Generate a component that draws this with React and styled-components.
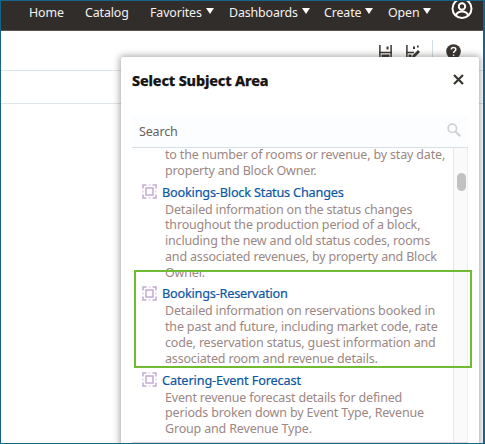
import React from "react";
import styled, { createGlobalStyle } from "styled-components";

const GlobalStyle = createGlobalStyle`
  *, *::before, *::after { box-sizing: border-box; }
  html, body { margin: 0; background: #fff; }
  body { font-family: "Noto Sans", "Open Sans", sans-serif; overflow: hidden; }
`;

const Window = styled.div`
  position: relative;
  display: flex;
  flex-direction: column;
  width: 485px;
  height: 444px;
  overflow: hidden;
  background: #fff;
  border: 1px solid #17648a;
  border-right-width: 2px;
`;

const NavBar = styled.nav`
  flex: none;
  display: flex;
  height: 30px;
  background: #312d2a;
  border-bottom: 1px solid #595653;
  padding-left: 28px;
`;

const NavItem = styled.div`
  flex: none;
  display: flex;
  width: ${(p) => p.$width}px;
  height: 24px;
  align-items: center;
  font-size: 12.4px;
  line-height: 24px;
  letter-spacing: -0.12px;
  color: #f4f2f0;
  white-space: nowrap;
`;

const Caret = styled.svg`
  flex: none;
  width: 8px;
  height: 6px;
  margin: 0 0 4px 4px;
  fill: #fff;
`;

const Avatar = styled.svg`
  flex: none;
  width: 22px;
  height: 22px;
  margin: -4px 0 0 -1px;
`;

const ToolStrip = styled.div`
  flex: none;
  display: flex;
  justify-content: flex-end;
  height: 40px;
  padding: 9px 22px 0 0;
  border-bottom: 1px solid #dde5ea;
`;

const ToolIcon = styled.svg`
  flex: none;
  width: 15px;
  height: 15px;
  margin: 4px ${(p) => p.$gap}px 0 0;
`;

const Divider = styled.div`
  width: 1px;
  height: 24px;
  margin-right: 13px;
  background: #d3dde4;
`;

const FormRow = styled.div`
  flex: none;
  height: 33px;
  border-bottom: 1px solid #dde5ea;
`;

const Dialog = styled.section`
  position: absolute;
  left: 120px;
  top: 56px;
  width: 358px;
  height: 400px;
  padding: 0 11px;
  background: #fff;
  border-radius: 2px 2px 0 0;
  box-shadow: 0 0 7px 1px rgba(40, 36, 30, 0.42);
`;

const DialogHeader = styled.header`
  display: flex;
  height: 58px;
  justify-content: space-between;
  align-items: flex-start;
  padding: 13px 4px 0 0;
`;

const DialogTitle = styled.h1`
  margin: 0;
  font-size: 14.4px;
  line-height: 22px;
  font-weight: 800;
  letter-spacing: -0.16px;
  color: #161513;
  -webkit-text-stroke: 0.25px #161513;
  white-space: nowrap;
`;

const CloseIcon = styled.svg`
  width: 11px;
  height: 11px;
  margin-top: 4px;
`;

const SearchField = styled.div`
  display: flex;
  align-items: center;
  justify-content: space-between;
  height: 33px;
  padding: 0 7px;
  background: #fbfdfe;
  border-bottom: 1px solid #d5dfe5;
  font-size: 12.5px;
  letter-spacing: -0.15px;
  color: #66615e;
`;

const SearchIcon = styled.svg`
  width: 14px;
  height: 14px;
  margin-top: -3px;
`;

const ListFrame = styled.div`
  display: flex;
  height: 295px;
  overflow: hidden;
  border-bottom: 1px solid #d8d8d8;
`;

const List = styled.div`
  flex: 1;
  min-width: 0;
  margin-top: -1.1px;
`;

const Track = styled.div`
  flex: none;
  width: 15px;
  padding: 25px 0 0 3px;
  background: #fafafa;
  border-left: 1px solid #e8e8e8;
  border-right: 1px solid #eeeeee;
`;

const Thumb = styled.div`
  width: 9px;
  height: 18px;
  border-radius: 4.5px;
  background: #c1c1c1;
`;

const Entry = styled.article`
  padding-left: 33px;
`;

const EntryHeading = styled.h2`
  display: flex;
  align-items: center;
  height: 23px;
  margin: 0 0 0 -23.5px;
  padding: 4px 0 1px;
  font-size: 12.7px;
  font-weight: 400;
  line-height: 18px;
  letter-spacing: ${(p) => p.$spacing}px;
  color: #0b57a4;
  -webkit-text-stroke: 0.2px #0b57a4;
  white-space: nowrap;
`;

const AreaIcon = styled.svg`
  flex: none;
  width: 15px;
  height: 15px;
  margin-right: 5.5px;
`;

const Description = styled.p`
  margin: 0;
  font-size: 12.5px;
  line-height: 15.8px;
  letter-spacing: -0.17px;
  color: #9b8784;
  white-space: pre;
`;

const Highlight = styled.div`
  position: absolute;
  left: 133px;
  top: 269px;
  width: 338px;
  height: 98px;
  border: 2px solid #6fbc33;
`;

const NAV = [
  { label: "Home", width: 56 },
  { label: "Catalog", width: 65 },
  { label: "Favorites", width: 79, menu: true },
  { label: "Dashboards", width: 95, menu: true },
  { label: "Create", width: 64, menu: true },
  { label: "Open", width: 64, menu: true },
];

const ENTRIES = [
  {
    lines: [
      "to the number of rooms or revenue, by stay date,",
      "property and Block Owner.",
    ],
  },
  {
    title: "Bookings-Block Status Changes",
    spacing: -0.19,
    lines: [
      "Detailed information on the status changes",
      "throughout the production period of a block,",
      "including the new and old status codes, rooms",
      "and associated revenues, by property and Block",
      "Owner.",
    ],
  },
  {
    title: "Bookings-Reservation",
    spacing: -0.21,
    lines: [
      "Detailed information on reservations booked in",
      "the past and future, including market code, rate",
      "code, reservation status, guest information and",
      "associated room and revenue details.",
    ],
  },
  {
    title: "Catering-Event Forecast",
    spacing: -0.12,
    lines: [
      "Event revenue forecast details for defined",
      "periods broken down by Event Type, Revenue",
      "Group and Revenue Type.",
    ],
  },
];

function SubjectAreaIcon() {
  return (
    <AreaIcon viewBox="0 0 15 15" fill="none" stroke="#c3abd6" strokeWidth="1.5">
      <path d="M1 4.500V1h3.500M10.500 1H14v3.500M14 10.500V14h-3.500M4.500 14H1v-3.500" />
      <rect x="4" y="4" width="7" height="7" />
      <path d="M6.500 1h2M6.500 14h2M1 6.500v2M14 6.500v2" strokeWidth="0.800" />
    </AreaIcon>
  );
}

export default function App() {
  return (
    <>
      <GlobalStyle />
      <Window>
        <NavBar>
          {NAV.map((n) => (
            <NavItem key={n.label} $width={n.width}>
              {n.label}
              {n.menu && (
                <Caret viewBox="0 0 8 6">
                  <path d="M0 0h8L4 6z" />
                </Caret>
              )}
            </NavItem>
          ))}
          <Avatar viewBox="0 0 22 22" fill="none" stroke="#fff" strokeWidth="2">
            <circle cx="11" cy="11.500" r="9.500" />
            <circle cx="11" cy="9.500" r="3.200" />
            <path d="M4.800 18c1.400-2.600 3.500-3.500 6.200-3.500s4.800.900 6.200 3.500" />
          </Avatar>
        </NavBar>
        <ToolStrip>
          <ToolIcon $gap={12} viewBox="0 0 15 15">
            <path d="M1.900 1v12M13.100 1v12M1 8.500h13" fill="none" stroke="#3a3632" strokeWidth="1.500" />
            <path d="M8.500 2.500h2v3h-2zM3.500 10.500h8V15h-8z" fill="#3a3632" />
          </ToolIcon>
          <ToolIcon $gap={12} viewBox="0 0 15 15">
            <path d="M1.900 1v12M1 8.500h8" fill="none" stroke="#3a3632" strokeWidth="1.500" />
            <path d="M8 2.500h2v2.500H8zM12 1.500h1.700v2H12zM3.500 10.500h3V15h-3z" fill="#3a3632" />
            <path d="M6.500 14.500l1-3 5.500-5.500 2 2-5.500 5.500z" fill="#3a3632" />
          </ToolIcon>
          <Divider />
          <ToolIcon $gap={0} viewBox="0 0 15 15">
            <circle cx="7.500" cy="7.500" r="7.300" fill="#3a3632" />
            <path d="M5.300 5.600c0-3 4.500-2.800 4.500-.2 0 1.800-2.200 1.600-2.200 3.600M7.600 10.500v1.500" fill="none" stroke="#fff" strokeWidth="1.500" />
          </ToolIcon>
        </ToolStrip>
        <FormRow />
        <Dialog>
          <DialogHeader>
            <DialogTitle>Select Subject Area</DialogTitle>
            <CloseIcon viewBox="0 0 11 11" stroke="#3a3632" strokeWidth="2.200">
              <path d="M1 1l9 9M10 1l-9 9" />
            </CloseIcon>
          </DialogHeader>
          <SearchField>
            Search
            <SearchIcon viewBox="0 0 14 14" fill="none" stroke="#d0d0d0">
              <circle cx="5.300" cy="5.300" r="4.200" strokeWidth="1.600" />
              <path d="M8.500 8.500l4.800 4.800" strokeWidth="2.200" />
            </SearchIcon>
          </SearchField>
          <ListFrame>
            <List>
              {ENTRIES.map((e, i) => (
                <Entry key={i}>
                  {e.title && (
                    <EntryHeading $spacing={e.spacing}>
                      <SubjectAreaIcon />
                      {e.title}
                    </EntryHeading>
                  )}
                  <Description>{e.lines.join("\n")}</Description>
                </Entry>
              ))}
            </List>
            <Track>
              <Thumb />
            </Track>
          </ListFrame>
        </Dialog>
        <Highlight />
      </Window>
    </>
  );
}
